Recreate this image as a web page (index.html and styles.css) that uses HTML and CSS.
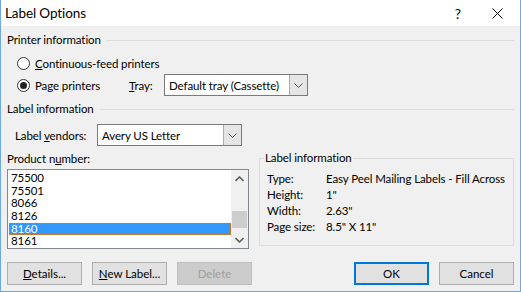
FILE: index.html
```html
<!DOCTYPE html>
<html lang="en">
<head>
  <meta charset="UTF-8">
  <title>Label Options</title>
  <link rel="stylesheet" href="styles.css">
</head>
<body>

<div class="window">
  <div class="titlebar">
    <span class="title">Label Options</span>
    <span class="help">?</span>
    <span class="close">
      <svg width="11" height="11" viewBox="0 0 11 11"><path d="M0.5 0.5 L10.5 10.5 M10.5 0.5 L0.5 10.5" stroke="#000" stroke-width="1" fill="none"/></svg>
    </span>
  </div>

  <div class="content">
    <div class="group-head">Printer information</div>

    <div class="radio-row first">
      <span class="radio"></span>
      <span><u>C</u>ontinuous-feed printers</span>
    </div>
    <div class="radio-row second">
      <span class="radio checked"></span>
      <span class="page-label">Pa<u>g</u>e printers</span>
      <span class="tray-label"><u>T</u>ray:</span>
      <div class="select tray">
        <span class="value">Default tray (Cassette)</span>
        <span class="drop"><svg width="9" height="5" viewBox="0 0 9 5"><path d="M0.5 0.5 L4.5 4.5 L8.5 0.5" stroke="#555" fill="none"/></svg></span>
      </div>
    </div>

    <div class="group-head second-head">Label information</div>

    <div class="vendor-row">
      <span class="vendor-label">Label <u>v</u>endors:</span>
      <div class="select vendor">
        <span class="value">Avery US Letter</span>
        <span class="drop"><svg width="9" height="5" viewBox="0 0 9 5"><path d="M0.5 0.5 L4.5 4.5 L8.5 0.5" stroke="#555" fill="none"/></svg></span>
      </div>
    </div>

    <div class="lower">
      <div class="product">
        <div class="product-label">Product n<u>u</u>mber:</div>
        <div class="listbox">
          <ul class="items">
            <li>75500</li>
            <li>75501</li>
            <li>8066</li>
            <li>8126</li>
            <li class="selected">8160</li>
            <li>8161</li>
          </ul>
          <div class="scrollbar">
            <span class="arrow"><svg width="9" height="6" viewBox="0 0 9 6"><path d="M0.5 5 L4.5 1 L8.5 5" stroke="#606060" stroke-width="1.6" fill="none"/></svg></span>
            <span class="track"><span class="thumb"></span></span>
            <span class="arrow"><svg width="9" height="6" viewBox="0 0 9 6"><path d="M0.5 1 L4.5 5 L8.5 1" stroke="#606060" stroke-width="1.6" fill="none"/></svg></span>
          </div>
        </div>
      </div>

      <div class="infobox">
        <span class="infobox-title">Label information</span>
        <dl class="info">
          <dt>Type:</dt><dd>Easy Peel Mailing Labels - Fill Across</dd>
          <dt>Height:</dt><dd>1"</dd>
          <dt>Width:</dt><dd>2.63"</dd>
          <dt>Page size:</dt><dd>8.5" X 11"</dd>
        </dl>
      </div>
    </div>

    <div class="buttons">
      <button class="btn"><u>D</u>etails...</button>
      <button class="btn"><u>N</u>ew Label...</button>
      <button class="btn disabled">Delete</button>
      <span class="spacer"></span>
      <button class="btn default">OK</button>
      <button class="btn">Cancel</button>
    </div>
  </div>
</div>

</body>
</html>
```

FILE: styles.css
```css
body { margin: 0; font-family: Lato, "Liberation Sans", sans-serif; font-size: 11.5px; letter-spacing: -0.1px; color: #000; background: #fff; }
u { text-decoration: underline; text-underline-offset: 1px; }

.window {
  width: 521px; height: 292px; box-sizing: border-box;
  border: 1px solid #6ea9e6; border-top: none;
  display: flex; flex-direction: column; background: #f0f0f0;
}
.titlebar { height: 26px; background: #fff; display: flex; align-items: center; }
.title { font-size: 13.5px; margin-left: 4px; flex: 1; }
.help { font-size: 14px; margin-right: 31px; }
.close { margin-right: 17px; display: flex; }

.content { flex: 1; padding: 6px 6px 0 6px; display: flex; flex-direction: column; }

.group-head { display: flex; align-items: center; height: 16px; line-height: 16px; gap: 6px; }
.group-head::after { content: ""; flex: 1; border-top: 1px solid #dcdcdc; }
.second-head { margin-top: 5px; }

.radio-row { display: flex; align-items: center; height: 22px; white-space: nowrap; }
.radio-row.first { margin-top: 4px; }
.radio {
  width: 11px; height: 11px; border: 1px solid #333; border-radius: 50%;
  background: #fff; margin: 0 5px 0 10px; position: relative;
}
.radio.checked::after {
  content: ""; position: absolute; left: 2px; top: 2px;
  width: 7px; height: 7px; border-radius: 50%; background: #222;
}
.page-label { width: 94px; }
.tray-label { width: 35px; }

.select {
  height: 22px; box-sizing: border-box; border: 1px solid #7a7a7a; background: #fff;
  display: flex; align-items: center;
}
.select .value { flex: 1; padding-left: 4px; white-space: nowrap; }
.select .drop {
  width: 17px; height: 100%; background: #e5e5e5; border-left: 1px solid #acacac;
  display: flex; align-items: center; justify-content: center;
}
.tray { width: 144px; }
.vendor { width: 145px; }

.vendor-row { display: flex; align-items: center; margin-top: 7px; height: 22px; }
.vendor-label { margin-left: 8px; width: 82px; white-space: nowrap; }

.lower { display: flex; margin-top: 5px; }
.product { width: 242px; }
.product-label { height: 16px; line-height: 16px; }
.listbox {
  margin-top: 2px; height: 80px; box-sizing: border-box; border: 1px solid #828790;
  background: #fff; display: flex;
}
.items { list-style: none; margin: 0; padding: 2px 0 0 1px; flex: 1; overflow: hidden; }
.items li { height: 12.7px; line-height: 12.7px; padding-left: 2px; }
.items li.selected { background: #3399ff; color: #fff; outline: 1px dotted #c67a2c; outline-offset: -1px; }
.scrollbar { width: 17px; background: #f0f0f0; display: flex; flex-direction: column; }
.scrollbar .arrow { height: 17px; display: flex; align-items: center; justify-content: center; }
.scrollbar .track { flex: 1; position: relative; }
.thumb { position: absolute; left: 1px; right: 1px; top: 24px; height: 17px; background: #cdcdcd; }

.infobox {
  margin-left: 10px; margin-top: 7px; width: 255px; height: 88px; box-sizing: border-box;
  border: 1px solid #dcdcdc; position: relative;
}
.infobox-title { position: absolute; left: 4px; top: -9px; background: #f0f0f0; padding: 0 1px; line-height: 16px; }
.info {
  margin: 12px 0 0 7px; display: grid; grid-template-columns: 59px auto;
  row-gap: 0; line-height: 16px;
}
.info dt, .info dd { margin: 0; white-space: nowrap; }

.buttons { display: flex; margin-top: 13px; gap: 10px; }
.spacer { flex: 1; }
.btn {
  width: 75px; height: 23px; box-sizing: border-box; font: inherit;
  background: #e1e1e1; border: 1px solid #adadad; padding: 0; color: #000;
}
.btn.disabled { background: #cccccc; border-color: #bfbfbf; color: #a0a0a0; }
.btn.default { border: 2px solid #0078d7; }
```
